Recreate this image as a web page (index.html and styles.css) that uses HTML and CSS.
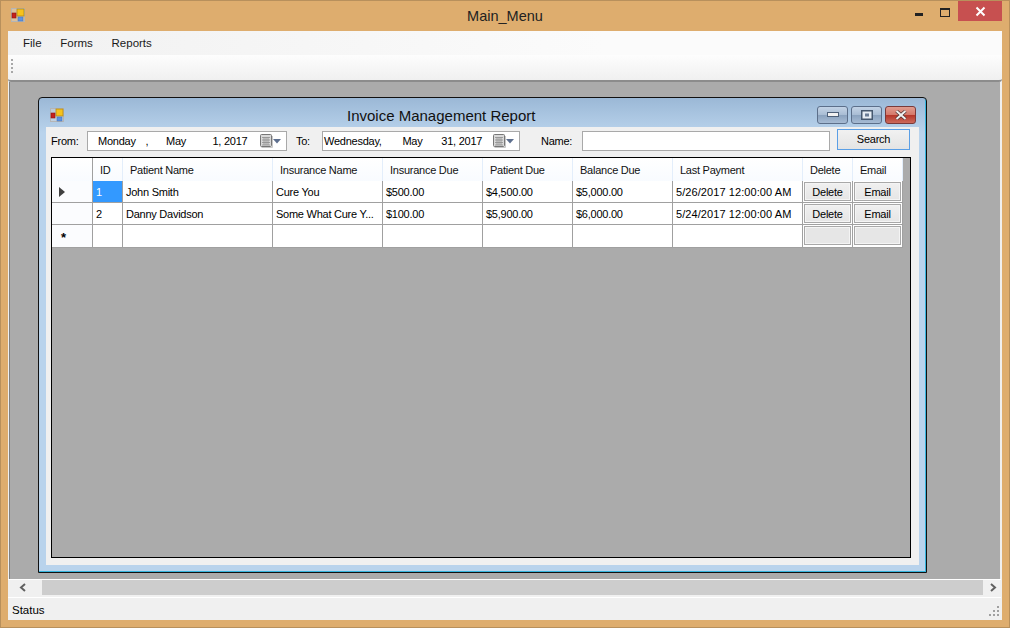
FILE: index.html

```html
<!DOCTYPE html>
<html lang="en">
<head>
  <meta charset="UTF-8" />
  <title>Main_Menu</title>
  <link rel="stylesheet" href="styles.css">
</head>
<body>
  <svg class="defs" width="0" height="0">
    <symbol id="app-icon" viewBox="0 0 14 14">
      <rect x="0.5" y="0.5" width="13" height="13" fill="#d8d8d8" fill-opacity="0.45" stroke="#b5b5b5"/>
      <rect x="6" y="1" width="7" height="7" fill="#f6c21c" stroke="#b58a1a" stroke-width="0.8"/>
      <rect x="1" y="5" width="4" height="5" fill="#c6201c" stroke="#8a1512" stroke-width="0.6"/>
      <rect x="7" y="9" width="5" height="4" fill="#5f93e0" stroke="#3f6fb8" stroke-width="0.5"/>
    </symbol>
    <symbol id="cal-icon" viewBox="0 0 21 14">
      <rect x="0.5" y="0.5" width="11" height="12" rx="1" fill="#d9d9d9" stroke="#777"/>
      <path d="M2 3.500h8M2 6h8M2 8.500h8M2 11h8M4 3v8M6 3v8M8 3v8" stroke="#8f8f8f" stroke-width="0.8" fill="none"/>
      <path d="M1.500 13.500h11V2" stroke="#c8c8c8" fill="none"/>
      <path d="M13 5h8l-4 4.500z" fill="#5d6f8e"/>
    </symbol>
  </svg>

  <div class="main-window">
    <div class="main-title">
      <svg class="app-icon"><use href="#app-icon"/></svg>
      <div class="main-title-text">Main_Menu</div>
      <div class="main-controls">
        <div class="main-min"></div>
        <div class="main-max"></div>
        <div class="main-close">
          <svg width="11" height="11" viewBox="0 0 11 11"><path d="M1.500 1.500l8 8M9.500 1.500l-8 8" stroke="#fff" stroke-width="2"/></svg>
        </div>
      </div>
    </div>

    <div class="client">
      <div class="menu-bar">
        <span class="menu-item">File</span>
        <span class="menu-item">Forms</span>
        <span class="menu-item">Reports</span>
      </div>
      <div class="tool-strip"><div class="grip"></div></div>

      <div class="mdi-area">
        <div class="child-window">
          <div class="child-title">
            <svg class="app-icon"><use href="#app-icon"/></svg>
            <div class="child-title-text">Invoice Management Report</div>
            <div class="child-controls">
              <div class="ctl-btn">
                <svg width="12" height="6" viewBox="0 0 12 6"><rect x="0.500" y="0.500" width="11" height="4" fill="#f2f2f2" stroke="#4d5f78"/></svg>
              </div>
              <div class="ctl-btn">
                <svg width="12" height="10" viewBox="0 0 12 10"><rect x="0.750" y="0.750" width="10.500" height="8.500" fill="#e8eef5" stroke="#46586f" stroke-width="1.500"/><rect x="4" y="3.500" width="4" height="3" fill="#6b7d96"/></svg>
              </div>
              <div class="ctl-btn ctl-close">
                <svg width="12" height="10" viewBox="0 0 12 10"><path d="M1.500 1l9 8M10.500 1l-9 8" stroke="#4a3030" stroke-width="3.400"/><path d="M1.500 1l9 8M10.500 1l-9 8" stroke="#f2f2f2" stroke-width="2"/></svg>
              </div>
            </div>
          </div>

          <div class="child-client">
            <div class="filter-row">
              <span class="label from-label">From:</span>
              <div class="date-box from-box">
                <span class="seg-from-day">Monday</span>
                <span class="seg-from-comma">,</span>
                <span class="seg-from-month">May</span>
                <span class="seg-from-date">1, 2017</span>
                <svg class="cal-icon"><use href="#cal-icon"/></svg>
              </div>
              <span class="label to-label">To:</span>
              <div class="date-box to-box">
                <span class="seg-to-day">Wednesday,</span>
                <span class="seg-to-month">May</span>
                <span class="seg-to-date">31, 2017</span>
                <svg class="cal-icon"><use href="#cal-icon"/></svg>
              </div>
              <span class="label name-label">Name:</span>
              <div class="name-box"></div>
              <div class="search-btn">Search</div>
            </div>

            <div class="grid">
              <div class="row head-row">
                <div class="head-cell head-corner"></div>
                <div class="head-cell">ID</div>
                <div class="head-cell">Patient Name</div>
                <div class="head-cell">Insurance Name</div>
                <div class="head-cell">Insurance Due</div>
                <div class="head-cell">Patient Due</div>
                <div class="head-cell">Balance Due</div>
                <div class="head-cell">Last Payment</div>
                <div class="head-cell">Delete</div>
                <div class="head-cell">Email</div>
              </div>
              <div class="row">
                <div class="row-head"><span class="row-arrow"></span></div>
                <div class="cell cell-selected">1</div>
                <div class="cell">John Smith</div>
                <div class="cell">Cure You</div>
                <div class="cell">$500.00</div>
                <div class="cell">$4,500.00</div>
                <div class="cell">$5,000.00</div>
                <div class="cell cell-date">5/26/2017 12:00:00 AM</div>
                <div class="cell cell-btn"><div class="grid-btn">Delete</div></div>
                <div class="cell cell-btn"><div class="grid-btn">Email</div></div>
              </div>
              <div class="row">
                <div class="row-head"></div>
                <div class="cell">2</div>
                <div class="cell">Danny Davidson</div>
                <div class="cell">Some What Cure Y...</div>
                <div class="cell">$100.00</div>
                <div class="cell">$5,900.00</div>
                <div class="cell">$6,000.00</div>
                <div class="cell cell-date">5/24/2017 12:00:00 AM</div>
                <div class="cell cell-btn"><div class="grid-btn">Delete</div></div>
                <div class="cell cell-btn"><div class="grid-btn">Email</div></div>
              </div>
              <div class="row">
                <div class="row-head row-new">*</div>
                <div class="cell"></div>
                <div class="cell"></div>
                <div class="cell"></div>
                <div class="cell"></div>
                <div class="cell"></div>
                <div class="cell"></div>
                <div class="cell"></div>
                <div class="cell cell-btn"><div class="grid-btn grid-btn-empty"></div></div>
                <div class="cell cell-btn"><div class="grid-btn grid-btn-empty"></div></div>
              </div>
            </div>
          </div>
        </div>
      </div>

      <div class="scroll-bar">
        <div class="scroll-left">
          <svg width="8" height="9" viewBox="0 0 8 9"><path d="M6 1L2 4.500L6 8" stroke="#606060" stroke-width="2" fill="none"/></svg>
        </div>
        <div class="scroll-thumb"></div>
        <div class="scroll-right">
          <svg width="8" height="9" viewBox="0 0 8 9"><path d="M2 1L6 4.500L2 8" stroke="#606060" stroke-width="2" fill="none"/></svg>
        </div>
      </div>

      <div class="status-bar">
        <span>Status</span>
        <svg class="size-grip" width="11" height="11" viewBox="0 0 11 11">
          <path d="M8 0h2v2H8zM4 4h2v2H4zM8 4h2v2H8zM0 8h2v2H0zM4 8h2v2H4zM8 8h2v2H8z" fill="#a0a0a0"/>
        </svg>
      </div>
    </div>
  </div>
</body>
</html>
```

FILE: styles.css

```css
* {
  box-sizing: border-box;
}
html, body {
  margin: 0;
  height: 100%;
  overflow: hidden;
}
body {
  font-family: "Liberation Sans", Arial, sans-serif;
  font-size: 11px;
  letter-spacing: -0.25px;
  color: #000;
}
.defs {
  position: absolute;
}
.app-icon {
  width: 14px;
  height: 14px;
  flex: none;
}

/* outer window */
.main-window {
  width: 1010px;
  height: 628px;
  background: #dead6e;
  border: 1px solid #b8905c;
  display: flex;
  flex-direction: column;
}
.main-title {
  height: 30px;
  display: flex;
  flex: none;
  position: relative;
  padding: 7px 0 0 10px;
}
.main-title-text {
  flex: 1;
  text-align: center;
  font-size: 14.5px;
  letter-spacing: 0;
  line-height: 16px;
  color: #222;
  padding-right: 24px;
}
.main-controls {
  position: absolute;
  top: 0;
  right: 7px;
  display: flex;
}
.main-min {
  width: 8px;
  height: 3px;
  background: #222;
  margin: 12px 17px 0 0;
}
.main-max {
  width: 10px;
  height: 9px;
  border: 1px solid #222;
  border-top-width: 2px;
  margin: 7px 8px 0 0;
}
.main-close {
  width: 44px;
  height: 20px;
  background: #c75050;
  display: flex;
  align-items: center;
  justify-content: center;
}
.client {
  flex: 1;
  margin: 0 7px 7px;
  background: #f0f0f0;
  display: flex;
  flex-direction: column;
  min-height: 0;
}

/* menu and tool strip */
.menu-bar {
  height: 24px;
  flex: none;
  background: linear-gradient(to right, #f1f1f1, #fbfbfb 60%);
  padding: 0 0 0 15px;
  font-size: 11.5px;
  letter-spacing: 0;
  line-height: 24px;
}
.menu-item {
  margin-right: 15.5px;
  color: #1a1a1a;
}
.tool-strip {
  height: 27px;
  flex: none;
  background: linear-gradient(to bottom, #fdfdfd, #f0f0f0);
  border-bottom: 2px solid #8c8c8c;
  border-radius: 0 0 3px 3px;
  padding: 4px 0 0 3px;
}
.grip {
  width: 2px;
  height: 15px;
  background: repeating-linear-gradient(to bottom, #a8a8a8 0, #a8a8a8 2px, transparent 2px, transparent 4px);
}

/* mdi area */
.mdi-area {
  flex: 1;
  position: relative;
  background: #ababab;
  border-left: 1px solid #808080;
  margin: 0 2px 0 1px;
  min-height: 0;
}
.child-window {
  position: absolute;
  left: 28px;
  top: 15px;
  width: 889px;
  height: 476px;
  background: linear-gradient(to bottom, #9bb8d6, #b9d3ec 35px);
  border: 1px solid #111;
  border-radius: 4px 4px 0 0;
  box-shadow: inset -1px -1px 0 #35b5de;
  display: flex;
  flex-direction: column;
}
.child-title {
  height: 29px;
  flex: none;
  display: flex;
  padding: 10px 10px 0 11px;
}
.child-title-text {
  margin-left: 283px;
  margin-top: -1px;
  font-size: 15px;
  letter-spacing: 0;
  line-height: 18px;
  color: #111;
  flex: 1;
}
.child-controls {
  display: flex;
  gap: 3px;
  margin-top: -2px;
}
.ctl-btn {
  width: 31px;
  height: 18px;
  border: 1px solid #5c6f8a;
  border-radius: 3px;
  background: linear-gradient(to bottom, #c3d3e6, #a9bdd4 48%, #8ba3bf 52%, #a6bbd4);
  display: flex;
  align-items: center;
  justify-content: center;
}
.ctl-close {
  border-color: #7a3a3a;
  background: linear-gradient(to bottom, #e09c90, #d5796b 48%, #b5362a 52%, #cc6a5c);
}
.child-client {
  flex: 1;
  margin: 0 7px 7px;
  background: #f0f0f0;
  padding: 2px 8px 7px 5px;
  display: flex;
  flex-direction: column;
  min-height: 0;
}

/* filter row */
.filter-row {
  height: 28px;
  flex: none;
  display: flex;
  align-items: flex-start;
}
.label {
  margin-top: 6px;
  line-height: 13px;
}
.date-box, .name-box {
  height: 20px;
  margin-top: 2px;
  background: #fff;
  border: 1px solid #a9a9a9;
  position: relative;
  line-height: 18px;
  white-space: nowrap;
}
.from-label {
  width: 36px;
}
.from-box {
  width: 200px;
}
.to-label {
  margin-left: 9px;
  width: 26px;
}
.to-box {
  width: 198px;
}
.name-label {
  margin-left: 21px;
  width: 41px;
}
.name-box {
  width: 248px;
}
.seg-from-day {
  margin-left: 10px;
}
.seg-from-comma {
  margin-left: 7px;
}
.seg-from-month {
  margin-left: 15px;
}
.seg-from-date {
  margin-left: 23.5px;
}
.seg-to-day {
  margin-left: 1px;
}
.seg-to-month {
  margin-left: 18px;
}
.seg-to-date {
  margin-left: 16px;
}
.cal-icon {
  position: absolute;
  right: 5px;
  top: 2px;
  width: 21px;
  height: 14px;
}
.search-btn {
  width: 73px;
  height: 21px;
  margin-left: 7px;
  border: 1px solid #5a9fe6;
  background: linear-gradient(to bottom, #f1f1f1, #e4e4e4);
  text-align: center;
  line-height: 19px;
}

/* data grid */
.grid {
  flex: 1;
  background: #ababab;
  border: 1px solid #000;
  min-height: 0;
}
.row {
  display: grid;
  grid-template-columns: 41px 30px 150px 110px 100px 90px 100px 130px 50px 50px;
  width: 851px;
  height: 22px;
}
.head-row {
  height: 23px;
}
.head-cell {
  background: linear-gradient(to bottom, #fff, #f8fbff);
  border-right: 1px solid #e3eefb;
  border-bottom: 1px solid #a0a0a0;
  padding: 1px 0 0 7px;
  line-height: 23px;
  color: #111;
}
.head-corner {
  border-right-color: #a0a0a0;
}
.cell {
  background: #fff;
  border-right: 1px solid #a0a0a0;
  border-bottom: 1px solid #a0a0a0;
  padding: 1px 0 0 3px;
  line-height: 21px;
  white-space: nowrap;
  overflow: hidden;
}
.cell-date {
  letter-spacing: 0.08px;
}
.cell-selected {
  background: #3399ff;
  color: #fff;
}
.row-head {
  background: #fbfcfe;
  border-right: 1px solid #a0a0a0;
  border-bottom: 1px solid #a0a0a0;
  padding: 6px 0 0 7px;
}
.row-new {
  padding: 4px 0 0 9px;
  font-size: 13px;
  font-weight: bold;
  line-height: 18px;
}
.row-arrow {
  display: block;
  width: 0;
  height: 0;
  border-left: 6px solid #404040;
  border-top: 5px solid transparent;
  border-bottom: 5px solid transparent;
}
.cell-btn {
  padding: 1px 1px 0;
  background: #fff;
}
.grid-btn {
  height: 19px;
  border: 1px solid #a8a8a8;
  box-shadow: inset 0 0 0 1px #f4f4f4;
  background: linear-gradient(to bottom, #f0f0f0, #e5e5e5);
  text-align: center;
  line-height: 18px;
}
.grid-btn-empty {
  background: #e6e6e6;
}

/* bottom bars */
.scroll-bar {
  height: 19px;
  flex: none;
  display: flex;
  background: #f0f0f0;
  border-top: 1px solid #fff;
  border-bottom: 1px solid #fff;
  margin-right: 1px;
}
.scroll-left {
  width: 34px;
  height: 15px;
  padding: 3px 0 0 11px;
}
.scroll-thumb {
  flex: 1;
  height: 15px;
  background: #cdcdcd;
}
.scroll-right {
  width: 18px;
  height: 15px;
  padding: 3px 0 0 6px;
}
.scroll-left svg, .scroll-right svg {
  display: block;
}
.status-bar {
  height: 22px;
  flex: none;
  position: relative;
  background: #f0f0f0;
  padding: 1px 0 0 4px;
  font-size: 11.5px;
  letter-spacing: 0;
  line-height: 22px;
}
.size-grip {
  position: absolute;
  right: 2px;
  bottom: 3px;
}
```
